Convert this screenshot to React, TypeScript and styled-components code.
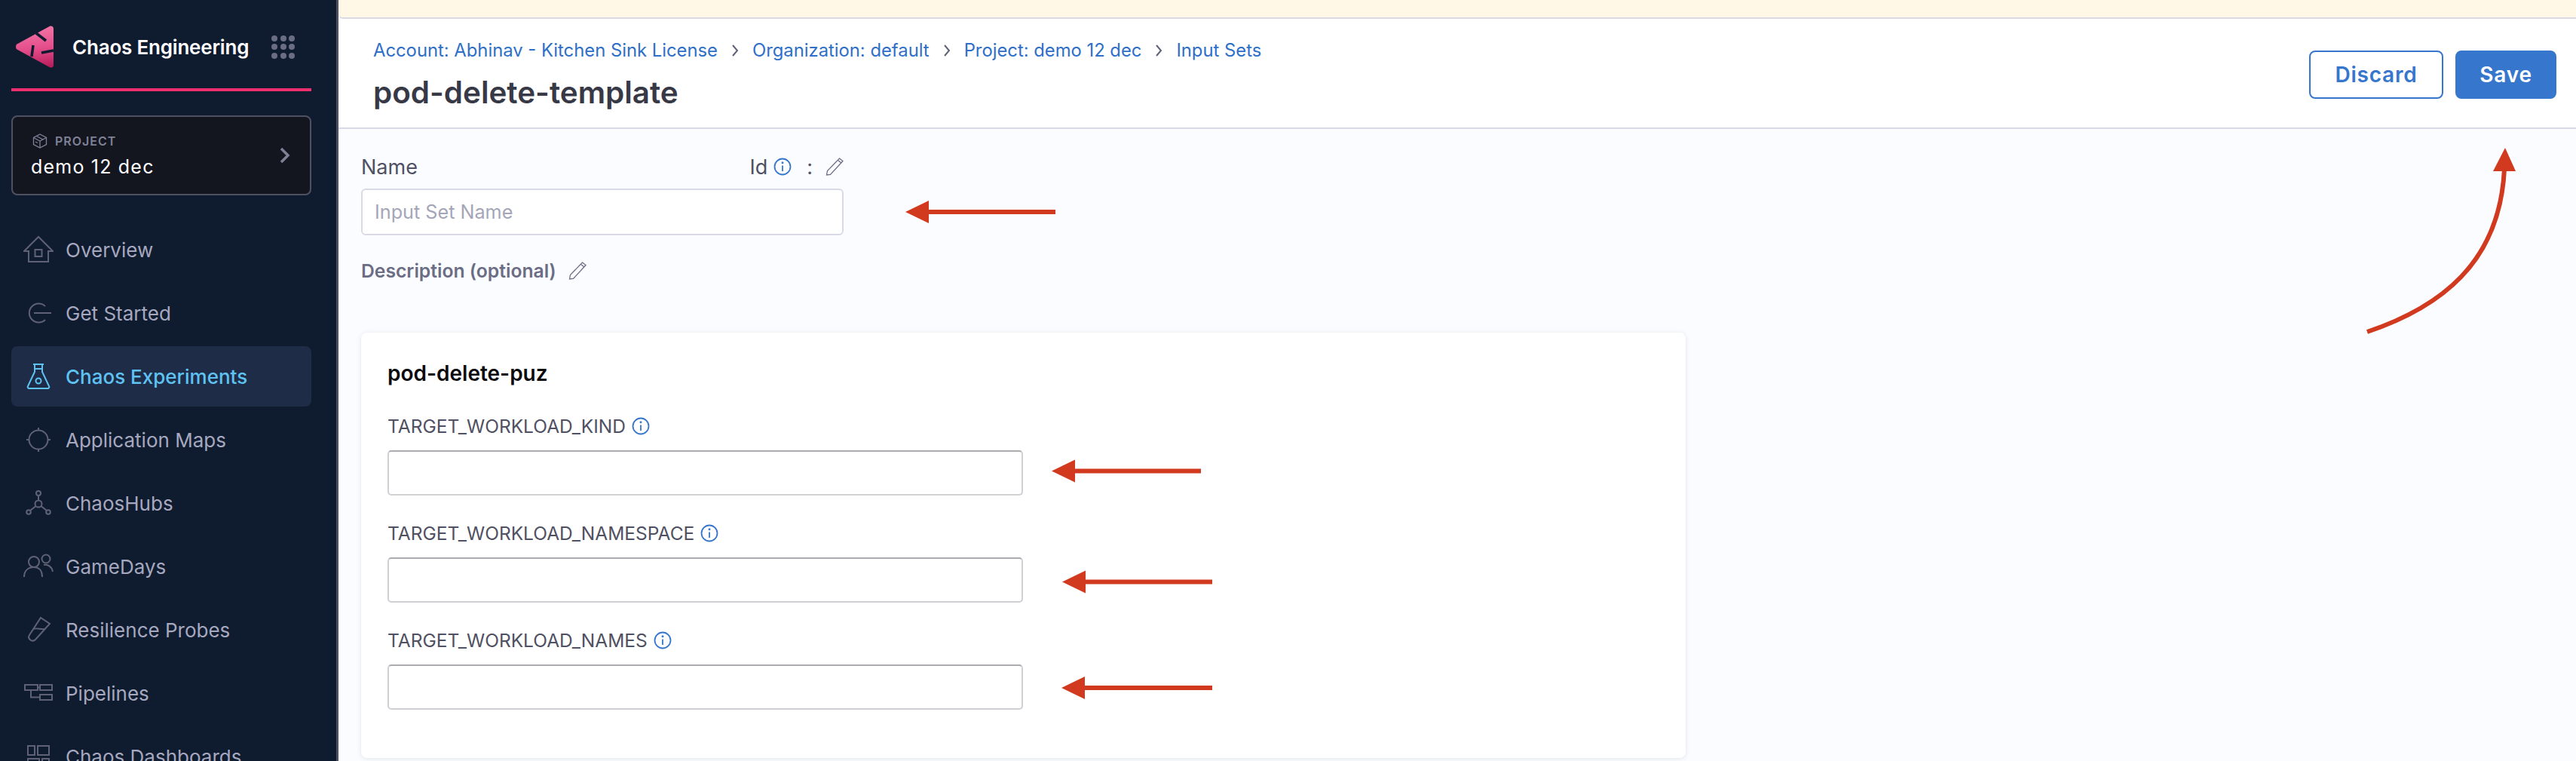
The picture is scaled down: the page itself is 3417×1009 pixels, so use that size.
import styled, { createGlobalStyle } from 'styled-components'
import type { ReactNode } from 'react'

const GlobalStyle = createGlobalStyle`
  html, body {
    margin: 0;
    padding: 0;
    background: #fbfcff;
    font-family: Inter, "Noto Sans", sans-serif;
  }
  * { box-sizing: border-box; }
`

const Page = styled.div`
  position: relative;
  display: flex;
  width: 3417px;
  height: 1009px;
  overflow: hidden;
`

const Sidebar = styled.aside`
  flex: 0 0 449px;
  height: 100%;
  overflow: hidden;
  background: #0f1b2f;
  border-right: 3px solid #4b4e5e;
  padding: 0 33px 0 15px;
`

const Brand = styled.div`
  display: flex;
  align-items: center;
  height: 117px;
  padding: 7px 0 0 6px;
`

const BrandName = styled.span`
  margin-left: 25px;
  font-size: 26px;
  font-weight: 600;
  letter-spacing: -0.2px;
  color: #fff;
  white-space: nowrap;
`

const AppGrid = styled.div`
  margin-left: 30px;
  display: grid;
  grid-template-columns: repeat(3, 8px);
  gap: 3.5px;
`

const AppDot = styled.span`
  width: 8px;
  height: 8px;
  border-radius: 50%;
  background: #6b6d85;
`

const BrandRule = styled.div`
  height: 4px;
  background: #ee2f6d;
`

const ProjectCard = styled.div`
  display: flex;
  align-items: center;
  justify-content: space-between;
  height: 106px;
  margin: 32px 0;
  padding: 0 25px 0 24px;
  background: #14161f;
  border: 2px solid #4f5162;
  border-radius: 8px;
`

const ProjectInfo = styled.div`
  display: flex;
  flex-direction: column;
  gap: 9px;
`

const ProjectCaption = styled.div`
  display: flex;
  align-items: center;
  gap: 10px;
  padding-left: 2px;
  font-size: 16px;
  font-weight: 600;
  letter-spacing: 1px;
  color: #7f8197;
`

const ProjectName = styled.div`
  font-size: 25px;
  letter-spacing: 1.2px;
  color: #fff;
`

const NavList = styled.nav`
  display: flex;
  flex-direction: column;
  gap: 4px;
`

const NavItem = styled.div<{ $active?: boolean }>`
  display: flex;
  align-items: center;
  gap: 16px;
  flex: 0 0 80px;
  padding-left: 16px;
  border-radius: 8px;
  background: ${(p) => (p.$active ? '#1e2c47' : 'transparent')};
  color: ${(p) => (p.$active ? '#5fc3f2' : '#a6a8bf')};
  font-size: 26px;
  font-weight: ${(p) => (p.$active ? 500 : 400)};
  white-space: nowrap;

  svg {
    flex: 0 0 40px;
    stroke: ${(p) => (p.$active ? '#5fc3f2' : '#5f6276')};
  }
`

const Main = styled.main`
  flex: 1;
  display: flex;
  flex-direction: column;
  min-width: 0;
  height: 100%;
`

const Banner = styled.div`
  flex: 0 0 25px;
  background: #fff8e7;
  border-bottom: 2px solid #d9dae5;
  border-bottom-left-radius: 6px;
`

const Header = styled.header`
  flex: 0 0 146px;
  display: flex;
  justify-content: space-between;
  align-items: flex-start;
  padding: 28px 26px 0 46px;
  background: #fff;
  border-bottom: 2px solid #d9dae5;
`

const Breadcrumbs = styled.div`
  display: flex;
  align-items: center;
  font-size: 23.8px;
  line-height: 28px;
  color: #2f6fc7;
  white-space: nowrap;
`

const CrumbChevron = styled.svg`
  width: 12px;
  height: 18px;
  margin: 0 17px;
  fill: none;
  stroke: #5f6276;
  stroke-width: 2;
`

const Title = styled.h1`
  margin: 18px 0 0;
  font-size: 40.4px;
  line-height: 48px;
  font-weight: 600;
  color: #383946;
`

const Actions = styled.div`
  display: flex;
  gap: 16px;
  margin-top: 14px;
`

const Button = styled.button<{ $primary?: boolean }>`
  height: 64px;
  width: ${(p) => (p.$primary ? '134px' : '178px')};
  border: 2px solid #3676cc;
  border-radius: 8px;
  background: ${(p) => (p.$primary ? '#3676cc' : '#fff')};
  color: ${(p) => (p.$primary ? '#fff' : '#3676cc')};
  font-family: inherit;
  font-size: 28px;
  font-weight: 600;
  letter-spacing: 0.8px;
`

const Content = styled.div`
  flex: 1;
  padding: 30px 0 0 30px;
  background: #fbfcff;
`

const NameRow = styled.div`
  display: flex;
  align-items: center;
  justify-content: space-between;
  width: 640px;
  height: 40px;
  font-size: 27px;
  color: #4f5162;
`

const IdGroup = styled.div`
  display: flex;
  align-items: center;
  gap: 8px;
`

const Colon = styled.span`
  margin: 0 9px 0 12px;
`

const NameInput = styled.input`
  display: block;
  width: 640px;
  height: 62px;
  margin-top: 9px;
  padding: 0 16px;
  border: 2px solid #d9dae5;
  border-radius: 6px;
  background: #fff;
  font-family: inherit;
  font-size: 25.2px;

  &::placeholder {
    color: #a4a6b8;
  }
`

const DescriptionRow = styled.div`
  display: flex;
  align-items: center;
  gap: 16px;
  height: 36px;
  margin-top: 29px;
  font-size: 24.7px;
  font-weight: 600;
  color: #6b6d85;
`

const Card = styled.section`
  width: 1757px;
  height: 564px;
  margin-top: 64px;
  padding: 36px 35px;
  background: #fff;
  border-radius: 8px;
  box-shadow: 0 1px 6px rgba(96, 97, 112, 0.16);
`

const CardTitle = styled.h2`
  margin: 0 0 36px;
  font-size: 28px;
  line-height: 36px;
  font-weight: 600;
  color: #0b0b0d;
`

const Field = styled.div`
  margin-bottom: 34px;
`

const FieldLabel = styled.div`
  display: flex;
  align-items: center;
  gap: 8px;
  height: 32px;
  font-size: 24.5px;
  color: #4f5162;
`

const FieldInput = styled.input`
  display: block;
  width: 843px;
  height: 60px;
  margin-top: 16px;
  border: 2px solid #d0d0d4;
  border-top-color: #acacb0;
  border-radius: 5px;
  background: #fff;
`

const Annotation = styled.svg`
  position: absolute;
  top: 0;
  left: 0;
  pointer-events: none;
`

const Icon = ({ children }: { children: ReactNode }) => (
  <svg width="40" height="40" viewBox="0 0 40 40" fill="none" strokeWidth="2">
    {children}
  </svg>
)

const InfoIcon = () => (
  <svg width="24" height="24" viewBox="0 0 24 24" fill="none" stroke="#3676cc" strokeWidth="1.8">
    <circle cx="12" cy="12" r="10.5" />
    <path d="M12 10.5V18" />
    <circle cx="12" cy="6.8" r="0.6" fill="#3676cc" />
  </svg>
)

const PencilIcon = () => (
  <svg width="24" height="24" viewBox="0 0 24 24" fill="none" stroke="#6b6d85" strokeWidth="1.3">
    <path d="M18.500 1l4.500 3.500L6.500 22.500 1.500 23l1-5.500z" />
    <path d="M16.500 3.500l4.500 3.500" />
  </svg>
)

const navItems: { label: string; icon: ReactNode; active?: boolean }[] = [
  {
    label: 'Overview',
    icon: (
      <Icon>
        <path d="M1 22L20 3l19 19h-6v14H7V22z" />
        <rect x="15.5" y="20" width="9" height="9" />
      </Icon>
    ),
  },
  {
    label: 'Get Started',
    icon: (
      <Icon>
        <path d="M29 11a12.500 12.500 0 1 0 0 18" />
        <path d="M14 20h23" />
      </Icon>
    ),
  },
  {
    label: 'Chaos Experiments',
    active: true,
    icon: (
      <Icon>
        <path d="M13 4h14M15 4v10L6 33a2 2 0 0 0 2 3h24a2 2 0 0 0 2-3l-9-19V4M14 10h12" />
        <circle cx="20" cy="26" r="3.5" />
      </Icon>
    ),
  },
  {
    label: 'Application Maps',
    icon: (
      <Icon>
        <circle cx="20" cy="20" r="12.5" />
        <path d="M20 4v3.500M20 32.500V36M4 20h3.500M32.500 20H36" />
      </Icon>
    ),
  },
  {
    label: 'ChaosHubs',
    icon: (
      <Icon>
        <circle cx="20" cy="7" r="3" />
        <circle cx="20" cy="21" r="4.5" />
        <circle cx="7" cy="32" r="2.8" />
        <circle cx="33" cy="32" r="2.8" />
        <path d="M20 10v6.500M16.500 24L9 30M23.500 24L31 30" />
      </Icon>
    ),
  },
  {
    label: 'GameDays',
    icon: (
      <Icon>
        <circle cx="14" cy="14" r="7" />
        <circle cx="30" cy="10" r="5.5" />
        <path d="M1 34c0-9 6-13 13-13 7 0 11 5 11 13M27 18c6-1 11 3 12 9" />
      </Icon>
    ),
  },
  {
    label: 'Resilience Probes',
    icon: (
      <Icon>
        <path d="M23 4l12 8-19 21c-2 2-4 2-6 1-3-2-4-4-2-7z" />
        <path d="M13 19c5-2 10 1 15 0" />
      </Icon>
    ),
  },
  {
    label: 'Pipelines',
    icon: (
      <Icon>
        <rect x="2" y="9" width="17" height="7" />
        <rect x="22" y="9" width="16" height="7" />
        <rect x="22" y="22" width="16" height="7" />
        <path d="M10 16v9.500h12M19 12.500h3" />
      </Icon>
    ),
  },
  {
    label: 'Chaos Dashboards',
    icon: (
      <Icon>
        <rect x="6" y="6" width="9" height="12" />
        <rect x="19" y="6" width="15" height="12" />
        <rect x="6" y="23" width="15" height="12" />
        <rect x="25" y="23" width="9" height="12" />
      </Icon>
    ),
  },
]

const fields = ['TARGET_WORKLOAD_KIND', 'TARGET_WORKLOAD_NAMESPACE', 'TARGET_WORKLOAD_NAMES']

// straight callout arrows: tip x, tail x, y
const arrows = [
  [1201, 1400, 281],
  [1395, 1593, 624.5],
  [1409, 1608, 771.5],
  [1408, 1608, 912],
]

function Crumb({ children }: { children: ReactNode }) {
  return (
    <>
      <span>{children}</span>
      <CrumbChevron viewBox="0 0 12 18">
        <path d="M3 2l6 7-6 7" />
      </CrumbChevron>
    </>
  )
}

export default function App() {
  return (
    <Page>
      <GlobalStyle />
      <Sidebar>
        <Brand>
          <svg width="50" height="56" viewBox="0 0 50 56">
            <defs>
              <linearGradient id="logo" x1="0.5" y1="0" x2="0.6" y2="1">
                <stop offset="0" stopColor="#f277a8" />
                <stop offset="0.55" stopColor="#e44d8a" />
                <stop offset="1" stopColor="#b81e5c" />
              </linearGradient>
            </defs>
            <path
              d="M1.500 24.500L45 .8c2.300-1.200 5 .3 5 3v48.400c0 2.700-2.700 4.200-5 3L1.500 31.500c-2-1.300-2-5.700 0-7z"
              fill="url(#logo)"
            />
            <path
              d="M27 10l13 10M23 26l-2 15M34 36l16-3"
              stroke="#0f1b2f"
              strokeWidth="3.500"
              fill="none"
            />
          </svg>
          <BrandName>Chaos Engineering</BrandName>
          <AppGrid>
            {Array.from({ length: 9 }, (_, i) => (
              <AppDot key={i} />
            ))}
          </AppGrid>
        </Brand>
        <BrandRule />
        <ProjectCard>
          <ProjectInfo>
            <ProjectCaption>
              <svg width="20" height="20" viewBox="0 0 20 20" fill="none" stroke="#7f8197" strokeWidth="1.3">
                <path d="M10 1l8.500 4.500v9L10 19l-8.500-4.500v-9z" />
                <path d="M1.500 5.500L10 10l8.500-4.500M10 10v9M5.500 3.500L14 8M4 11l3 1.500" />
              </svg>
              PROJECT
            </ProjectCaption>
            <ProjectName>demo 12 dec</ProjectName>
          </ProjectInfo>
          <svg width="16" height="24" viewBox="0 0 16 24" fill="none" stroke="#7f8197" strokeWidth="3.500">
            <path d="M3 3l9 9-9 9" />
          </svg>
        </ProjectCard>
        <NavList>
          {navItems.map((item) => (
            <NavItem key={item.label} $active={item.active}>
              {item.icon}
              {item.label}
            </NavItem>
          ))}
        </NavList>
      </Sidebar>
      <Main>
        <Banner />
        <Header>
          <div>
            <Breadcrumbs>
              <Crumb>Account: Abhinav - Kitchen Sink License</Crumb>
              <Crumb>Organization: default</Crumb>
              <Crumb>Project: demo 12 dec</Crumb>
              <span>Input Sets</span>
            </Breadcrumbs>
            <Title>pod-delete-template</Title>
          </div>
          <Actions>
            <Button>Discard</Button>
            <Button $primary>Save</Button>
          </Actions>
        </Header>
        <Content>
          <NameRow>
            <span>Name</span>
            <IdGroup>
              <span>Id</span>
              <InfoIcon />
              <Colon>:</Colon>
              <PencilIcon />
            </IdGroup>
          </NameRow>
          <NameInput placeholder="Input Set Name" />
          <DescriptionRow>
            Description (optional)
            <PencilIcon />
          </DescriptionRow>
          <Card>
            <CardTitle>pod-delete-puz</CardTitle>
            {fields.map((name) => (
              <Field key={name}>
                <FieldLabel>
                  {name}
                  <InfoIcon />
                </FieldLabel>
                <FieldInput />
              </Field>
            ))}
          </Card>
        </Content>
      </Main>
      <Annotation width="3417" height="1009" viewBox="0 0 3417 1009" fill="#d13a1e">
        {arrows.map(([tip, tail, y]) => (
          <path
            key={y}
            d={`M${tip} ${y}L${tip + 31} ${y - 15}V${y - 3}H${tail}V${y + 3}H${tip + 31}V${y + 15}Z`}
          />
        ))}
        <path d="M3140 440C3235 408 3316 350 3322 224" fill="none" stroke="#d13a1e" strokeWidth="6" />
        <path d="M3323 196L3337 227H3307Z" />
      </Annotation>
    </Page>
  )
}
